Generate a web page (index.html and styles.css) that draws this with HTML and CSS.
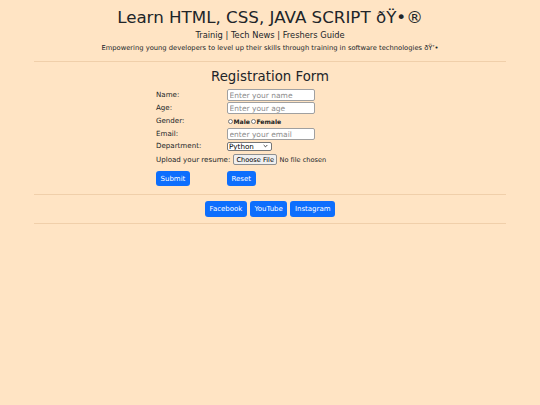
FILE: index.html
```html
<!DOCTYPE html>
<html lang="en">
<head>
<meta charset="utf-8">
<title>Learn HTML, CSS, JAVA SCRIPT</title>
<link rel="stylesheet" href="styles.css">
</head>
<body>
<header class="header">
  <h1 class="title">Learn HTML, CSS, JAVA SCRIPT ðŸ•®</h1>
  <p class="nav">Trainig | Tech News | Freshers Guide</p>
  <p class="tagline">Empowering young developers to level up their skills through training in software technologies ðŸ’•</p>
</header>
<div class="container">
  <hr class="rule">
  <h2 class="form-title">Registration Form</h2>
  <form class="form">
    <div class="row"><label class="label" for="name">Name:</label><input class="field" id="name" type="text" placeholder="Enter your name"></div>
    <div class="row"><label class="label" for="age">Age:</label><input class="field" id="age" type="text" placeholder="Enter your age"></div>
    <div class="row"><span class="label">Gender:</span><span class="radios"><input class="radio" type="radio" name="g" id="m"><label for="m">Male</label><input class="radio" type="radio" name="g" id="f"><label for="f">Female</label></span></div>
    <div class="row"><label class="label" for="email">Email:</label><input class="field" id="email" type="email" placeholder="enter your email"></div>
    <div class="row row-select"><label class="label" for="dept">Department:</label><span class="select-box"><select class="select" id="dept"><option>Python</option><option>Java</option><option>JavaScript</option></select><svg class="chevron" viewBox="0 0 6 4" width="5" height="4"><path d="M0.8 0.8 L3 3 L5.2 0.8" fill="none" stroke="#222" stroke-width="1"/></svg></span></div>
    <div class="row row-upload"><label class="label-upload" for="cv">Upload your resume:</label><input class="file" id="cv" type="file"></div>
    <div class="row row-buttons"><span class="label"><button class="btn" type="submit">Submit</button></span><button class="btn" type="reset">Reset</button></div>
  </form>
  <hr class="rule rule-mid">
  <div class="social">
    <a class="btn" href="#">Facebook</a>
    <a class="btn" href="#">YouTube</a>
    <a class="btn" href="#">Instagram</a>
  </div>
  <hr class="rule rule-bottom">
</div>
</body>
</html>
```
FILE: styles.css
```css
* { box-sizing: border-box; }
html, body { margin: 0; padding: 0; }
body {
  background: #ffe4c4;
  color: #212529;
  font-family: "DejaVu Sans", sans-serif;
  font-size: 7.1px;
}
.header { text-align: center; }
.title {
  font-size: 16.7px;
  font-weight: normal;
  line-height: 20px;
  margin: 7px 0 0;
}
.nav {
  font-size: 8.3px;
  line-height: 12px;
  margin: 2px 0 0;
}
.tagline {
  font-size: 6.75px;
  line-height: 10px;
  margin: 2px 0 0;
}
.container { width: 472px; margin: 0 auto; }
.rule {
  border: 0;
  border-top: 1px solid #f0cfaa;
  margin: 8px 0 0;
  height: 0;
}
.form-title {
  font-size: 13.3px;
  font-weight: normal;
  line-height: 16px;
  text-align: center;
  margin: 7px 0 0;
}
.form { width: 228px; margin: 4px auto 0; }
.row {
  display: flex;
  align-items: center;
  height: 12px;
  margin-bottom: 1px;
}
.label { width: 71px; flex: none; line-height: 12px; }
.field {
  width: 88px;
  height: 12px;
  border: 1px solid #a0a0a0;
  border-radius: 2px;
  background: #fff;
  padding: 0 1.5px;
  font: 7.5px "DejaVu Sans", sans-serif;
  color: #212529;
  outline: none;
}
.field::placeholder { color: #8c8c8c; }
.radios { display: flex; align-items: center; font-size: 6.1px; font-weight: bold; color: #222; }
.radio {
  appearance: none;
  width: 5px;
  height: 5px;
  margin: 0 0.5px 0 1px;
  border: 0.6px solid #777;
  border-radius: 50%;
  background: #fff;
}
.row-select { height: 10px; }
.select-box {
  display: flex;
  align-items: center;
  width: 45px;
  height: 9px;
  border: 1px solid #767676;
  border-radius: 2px;
  background: #fff;
  padding-right: 3px;
}
.select {
  appearance: none;
  flex: 1;
  min-width: 0;
  height: 7px;
  padding: 0 1px;
  border: 0;
  background: transparent;
  font: 7.2px/7px "DejaVu Sans", sans-serif;
  color: #000;
  outline: none;
}
.chevron { flex: none; }
.row-upload { height: 11px; margin-top: 3px; }
.label-upload { width: 77px; flex: none; }
.file { font: 6.6px "DejaVu Sans", sans-serif; height: 11px; color: #212529; }
.file::file-selector-button {
  font: 6.6px "DejaVu Sans", sans-serif;
  height: 11px;
  padding: 0 2.5px;
  margin-right: 2px;
  border: 1px solid #8f8f8f;
  border-radius: 2px;
  background: #efefef;
  color: #000;
}
.row-buttons { height: 15px; margin-top: 6px; margin-bottom: 0; }
.btn {
  display: inline-flex;
  align-items: center;
  justify-content: center;
  height: 15px;
  padding: 0 4.5px;
  border: 0;
  border-radius: 3px;
  background: #0d6efd;
  color: #fff;
  font: 7px "DejaVu Sans", sans-serif;
  text-decoration: none;
}
.rule-mid { margin-top: 8px; }
.social {
  display: flex;
  justify-content: center;
  gap: 3px;
  margin-top: 6px;
}
.social .btn { height: 16px; }
.rule-bottom { margin-top: 6px; }
```
